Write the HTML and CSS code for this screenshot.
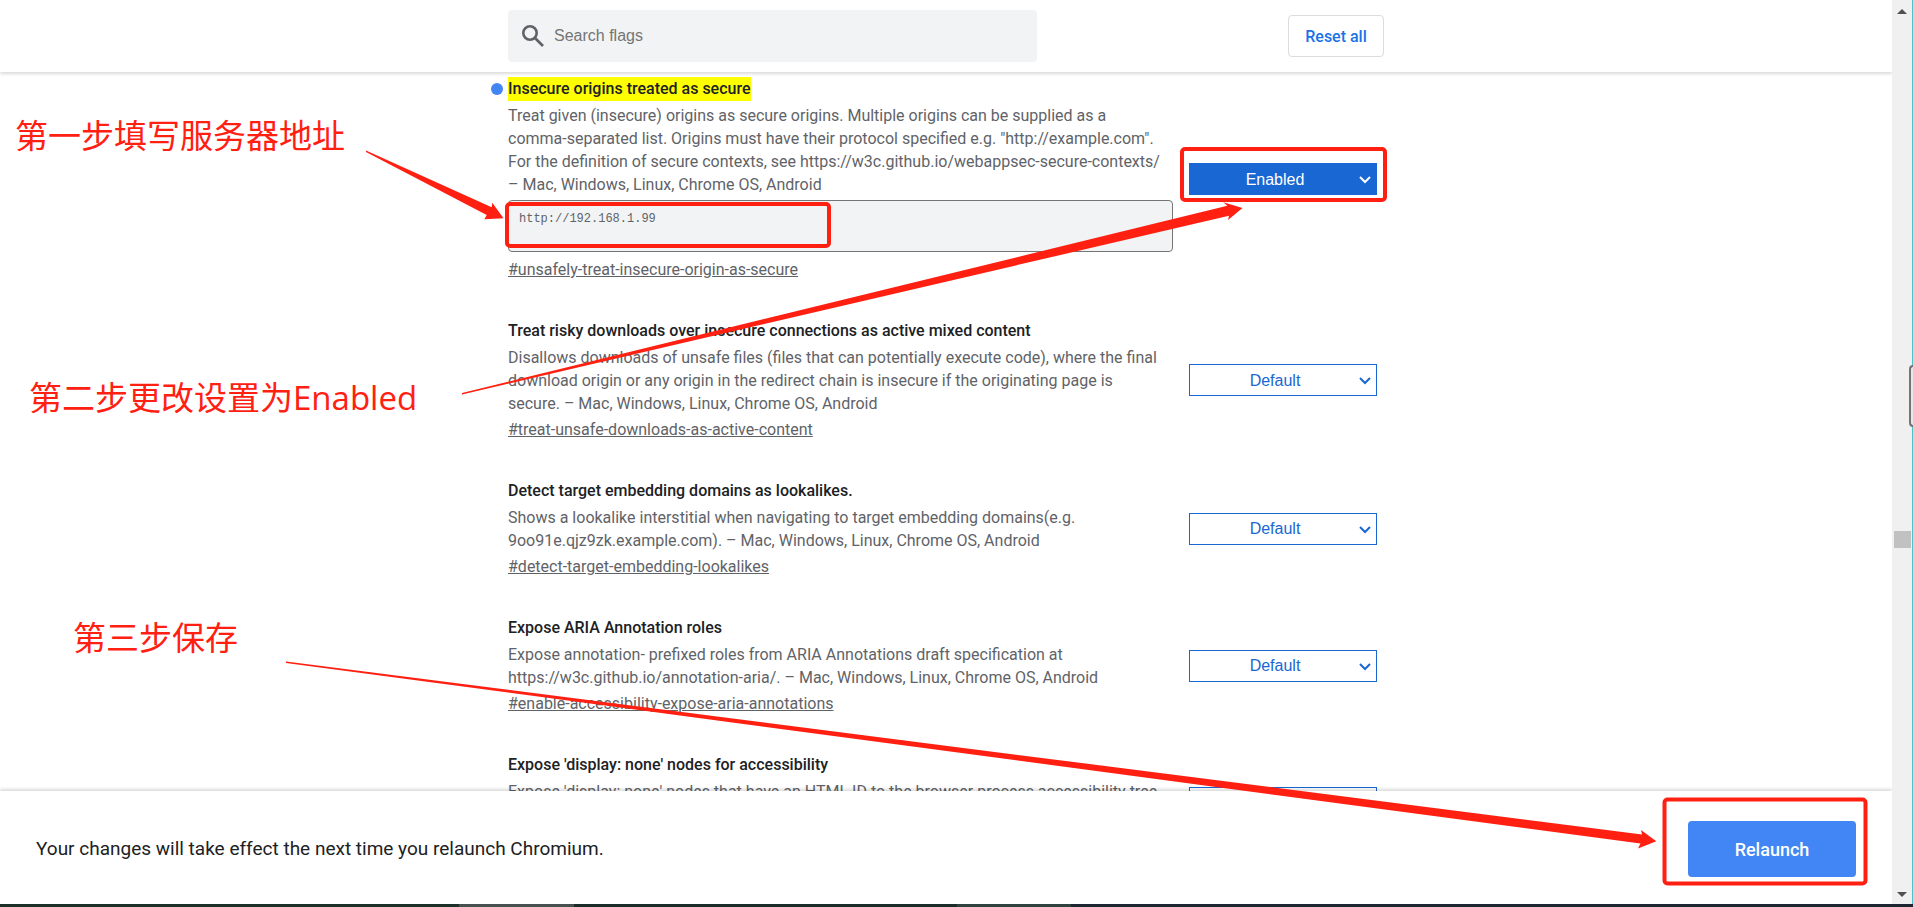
FILE: index.html
```html
<!DOCTYPE html>
<html lang="en">
<head>
<meta charset="utf-8">
<title>Experiments</title>
<link rel="stylesheet" href="styles.css">
</head>
<body>
<div class="window">
  <div class="page">
    <header class="toolbar">
      <div class="toolbar-inner">
        <label class="search">
          <svg class="search-icon" viewBox="0 0 22 22" aria-hidden="true"><circle cx="8" cy="8" r="6.7"/><path d="M13 13l8 8"/></svg>
          <input class="search-input" type="text" placeholder="Search flags" aria-label="Search flags">
        </label>
        <button class="reset" type="button">Reset all</button>
      </div>
    </header>

    <main class="flags">
      <section class="flag">
        <div class="flag-text">
          <h2 class="flag-title changed"><mark>Insecure origins treated as secure</mark></h2>
          <p class="flag-desc">Treat given (insecure) origins as secure origins. Multiple origins can be supplied as a<br>comma-separated list. Origins must have their protocol specified e.g. "http://example.com".<br>For the definition of secure contexts, see https://w3c.github.io/webappsec-secure-contexts/<br>– Mac, Windows, Linux, Chrome OS, Android</p>
          <textarea class="flag-origins" aria-label="Origins" spellcheck="false">http://192.168.1.99</textarea>
          <a class="flag-link" href="#unsafely-treat-insecure-origin-as-secure">#unsafely-treat-insecure-origin-as-secure</a>
        </div>
        <div class="picker enabled">
          <select aria-label="Insecure origins treated as secure"><option>Enabled</option><option>Disabled</option></select>
          <svg class="chevron" viewBox="0 0 12 8" aria-hidden="true"><path d="M1 1l5 5 5-5"/></svg>
        </div>
      </section>

      <section class="flag">
        <div class="flag-text">
          <h2 class="flag-title">Treat risky downloads over insecure connections as active mixed content</h2>
          <p class="flag-desc">Disallows downloads of unsafe files (files that can potentially execute code), where the final<br>download origin or any origin in the redirect chain is insecure if the originating page is<br>secure. – Mac, Windows, Linux, Chrome OS, Android</p>
          <a class="flag-link" href="#treat-unsafe-downloads-as-active-content">#treat-unsafe-downloads-as-active-content</a>
        </div>
        <div class="picker">
          <select aria-label="Treat risky downloads"><option>Default</option><option>Enabled</option></select>
          <svg class="chevron" viewBox="0 0 12 8" aria-hidden="true"><path d="M1 1l5 5 5-5"/></svg>
        </div>
      </section>

      <section class="flag">
        <div class="flag-text">
          <h2 class="flag-title">Detect target embedding domains as lookalikes.</h2>
          <p class="flag-desc">Shows a lookalike interstitial when navigating to target embedding domains(e.g.<br>9oo91e.qjz9zk.example.com). – Mac, Windows, Linux, Chrome OS, Android</p>
          <a class="flag-link" href="#detect-target-embedding-lookalikes">#detect-target-embedding-lookalikes</a>
        </div>
        <div class="picker">
          <select aria-label="Detect target embedding domains"><option>Default</option><option>Enabled</option></select>
          <svg class="chevron" viewBox="0 0 12 8" aria-hidden="true"><path d="M1 1l5 5 5-5"/></svg>
        </div>
      </section>

      <section class="flag">
        <div class="flag-text">
          <h2 class="flag-title">Expose ARIA Annotation roles</h2>
          <p class="flag-desc">Expose annotation- prefixed roles from ARIA Annotations draft specification at<br>https://w3c.github.io/annotation-aria/. – Mac, Windows, Linux, Chrome OS, Android</p>
          <a class="flag-link" href="#enable-accessibility-expose-aria-annotations">#enable-accessibility-expose-aria-annotations</a>
        </div>
        <div class="picker">
          <select aria-label="Expose ARIA Annotation roles"><option>Default</option><option>Enabled</option></select>
          <svg class="chevron" viewBox="0 0 12 8" aria-hidden="true"><path d="M1 1l5 5 5-5"/></svg>
        </div>
      </section>

      <section class="flag flag-cut">
        <div class="flag-text">
          <h2 class="flag-title">Expose 'display: none' nodes for accessibility</h2>
          <p class="flag-desc">Expose 'display: none' nodes that have an HTML ID to the browser process accessibility tree.</p>
        </div>
        <div class="picker">
          <select aria-label="Expose display none nodes"><option>Default</option><option>Enabled</option></select>
          <svg class="chevron" viewBox="0 0 12 8" aria-hidden="true"><path d="M1 1l5 5 5-5"/></svg>
        </div>
      </section>
    </main>

    <footer class="restart">
      <p class="restart-text">Your changes will take effect the next time you relaunch Chromium.</p>
      <button class="relaunch" type="button">Relaunch</button>
    </footer>
  </div>

  <div class="scrollbar" aria-hidden="true">
    <svg class="scroll-arrow" viewBox="0 0 10 5"><path d="M0 5L5 0l5 5z"/></svg>
    <div class="scroll-track"><div class="scroll-thumb"></div></div>
    <svg class="scroll-arrow" viewBox="0 0 10 5"><path d="M0 0l5 5 5-5z"/></svg>
  </div>
  <div class="desktop-edge"></div>
</div>
<div class="desktop-strip"></div>
<div class="side-handle"></div>

<svg class="marks" width="1913" height="907" viewBox="0 0 1913 907" aria-hidden="true">
  <g class="mark-box">
    <rect x="507" y="204" width="322" height="42" rx="3"/>
    <rect x="1182" y="149" width="203" height="51" rx="3"/>
    <rect x="1664.500" y="799.500" width="201" height="84" rx="3"/>
  </g>
  <g class="mark-arrow">
    <path d="M366 150.500L491.700 207.300 492.300 202.700 503.500 218.300 484.300 219.300 486.700 215 366 152z"/>
    <path d="M462 393L1227.300 205.700 1223.300 202.300 1242.500 208 1228 220 1229 215.700 462 394.500z"/>
    <path d="M286 661.500L1642 834.500 1641 830 1656.300 841.300 1638 848.500 1640.500 843.500 286 663z"/>
  </g>
</svg>
<p class="note note-one" lang="zh-CN">第一步填写服务器地址</p>
<p class="note note-two" lang="zh-CN">第二步更改设置为Enabled</p>
<p class="note note-three" lang="zh-CN">第三步保存</p>
</body>
</html>
```
FILE: styles.css
```css
* {
  box-sizing: border-box;
}

body {
  position: relative;
  display: flex;
  flex-direction: column;
  height: 100vh;
  margin: 0;
  overflow: hidden;
  background: #fff;
  color: #202124;
  font-family: Roboto, "Liberation Sans", sans-serif;
  font-size: 16px;
}

h2,
p {
  margin: 0;
}

.window {
  display: flex;
  flex: 1;
  min-height: 0;
}

.page {
  display: flex;
  flex: 1;
  flex-direction: column;
  min-width: 0;
}

.toolbar {
  position: relative;
  z-index: 1;
  padding: 10px 0;
  background: #fff;
  box-shadow: 0 2px 3px rgba(0, 0, 0, 0.14);
}

.toolbar-inner {
  display: flex;
  align-items: center;
  justify-content: space-between;
  max-width: 876px;
  margin: 0 auto;
}

.search {
  display: flex;
  align-items: center;
  gap: 10px;
  width: 529px;
  height: 52px;
  padding: 0 14px;
  border-radius: 4px;
  background: #f1f3f4;
}

.search-icon {
  width: 22px;
  height: 22px;
  fill: none;
  stroke: #5f6368;
  stroke-width: 2.6;
}

.search-input {
  flex: 1;
  padding: 0;
  border: 0;
  outline: 0;
  background: none;
  color: #202124;
  font: 16px "Liberation Sans", sans-serif;
}

.search-input::placeholder {
  color: #757575;
}

.reset {
  width: 96px;
  height: 42px;
  padding: 0;
  border: 1px solid #dadce0;
  border-radius: 4px;
  background: #fff;
  color: #1a73e8;
  font: 500 16px Roboto, sans-serif;
}

.flags {
  display: flex;
  flex: 1;
  flex-direction: column;
  gap: 38px;
  width: 100%;
  min-height: 0;
  max-width: 876px;
  margin: 0 auto;
  padding-top: 5px;
  overflow-x: visible;
  overflow-y: clip;
}

.flag {
  display: flex;
  flex-shrink: 0;
  align-items: center;
  gap: 16px;
}

.flag-cut {
  height: 100px;
}

.flag-cut .flag-text {
  align-self: flex-start;
}

.flag-text {
  display: flex;
  flex-direction: column;
  align-items: flex-start;
  width: 665px;
}

.flag-title {
  position: relative;
  margin-bottom: 3px;
  font-size: 16px;
  font-weight: 500;
  line-height: 24px;
}

.flag-title mark {
  display: block;
  background: #ff0;
  color: inherit;
}

.changed::before {
  content: "";
  position: absolute;
  top: 6px;
  left: -17px;
  width: 12px;
  height: 12px;
  border-radius: 50%;
  background: #4285f4;
}

.flag-desc {
  color: #5f6368;
  line-height: 23px;
  white-space: nowrap;
}

.flag-origins {
  width: 100%;
  height: 52px;
  margin: 4px 0 3px;
  padding: 10px;
  border: 1px solid #757575;
  border-radius: 4px;
  outline: 0;
  background: #f1f3f4;
  color: #5f6368;
  font: 12px/16px "Liberation Mono", monospace;
  resize: none;
}

.flag-link {
  margin-top: 3px;
  color: #5f6368;
  line-height: 23px;
}

.picker {
  position: relative;
  width: 188px;
  color: #1967d2;
}

.picker select {
  display: block;
  width: 100%;
  height: 32px;
  padding: 0 18px 0 2px;
  border: 1px solid #1967d2;
  border-radius: 0;
  outline: 0;
  appearance: none;
  background: #fff;
  color: inherit;
  font: 16px "Liberation Sans", sans-serif;
  text-align: center;
  text-align-last: center;
}

.enabled {
  color: #fff;
}

.enabled select {
  background: #1967d2;
}

.chevron {
  position: absolute;
  top: 13px;
  right: 6px;
  width: 12px;
  height: 8px;
  fill: none;
  stroke: currentColor;
  stroke-width: 2;
  pointer-events: none;
}

.restart {
  position: relative;
  z-index: 1;
  display: flex;
  flex-shrink: 0;
  align-items: center;
  justify-content: space-between;
  padding: 30px 36px 27px;
  background: #fff;
  box-shadow: 0 -2px 3px rgba(0, 0, 0, 0.14);
}

.restart-text {
  font-size: 19px;
  line-height: 24px;
}

.relaunch {
  width: 168px;
  height: 56px;
  padding: 0;
  border: 0;
  border-radius: 4px;
  background: #4285f4;
  color: #fff;
  font: 500 18px Roboto, sans-serif;
}

.scrollbar {
  position: relative;
  z-index: 2;
  display: flex;
  flex-direction: column;
  align-items: center;
  width: 20px;
  padding: 9px 0 7px;
  background: #f0f0f0;
}

.scroll-arrow {
  width: 10px;
  height: 5px;
  fill: #505050;
}

.scroll-track {
  display: grid;
  flex: 1;
  grid-template-rows: 60fr 17px 40fr;
  width: 17px;
}

.scroll-thumb {
  grid-row: 2;
  background: #c1c1c1;
}

.desktop-edge {
  width: 1px;
  background: #4fc3c7;
}

.desktop-strip {
  position: relative;
  z-index: 2;
  flex-shrink: 0;
  height: 3px;
  background: linear-gradient(90deg, #1c3028 0 24%, #46514f 24% 30%, #1b2b29 30% 50%, #30423f 50% 56%, #1b2632 56%);
}

.side-handle {
  position: absolute;
  z-index: 3;
  top: 365px;
  right: 0;
  width: 4px;
  height: 62px;
  border: 2px solid #757575;
  border-right: 0;
  border-radius: 4px 0 0 4px;
  background: #e8e8e8;
}

.marks {
  position: absolute;
  z-index: 4;
  top: 0;
  left: 0;
  pointer-events: none;
}

.mark-box {
  fill: none;
  stroke: #ff2012;
  stroke-width: 4;
}

.mark-arrow {
  fill: #ff2012;
}

.note {
  position: absolute;
  z-index: 4;
  color: #ff2012;
  font-family: "Open Sans", "Noto Sans CJK SC", sans-serif;
  font-size: 33px;
  line-height: 48px;
  white-space: nowrap;
}

.note-one {
  top: 112px;
  left: 15px;
}

.note-two {
  top: 374px;
  left: 29px;
}

.note-three {
  top: 614px;
  left: 73px;
}
```
